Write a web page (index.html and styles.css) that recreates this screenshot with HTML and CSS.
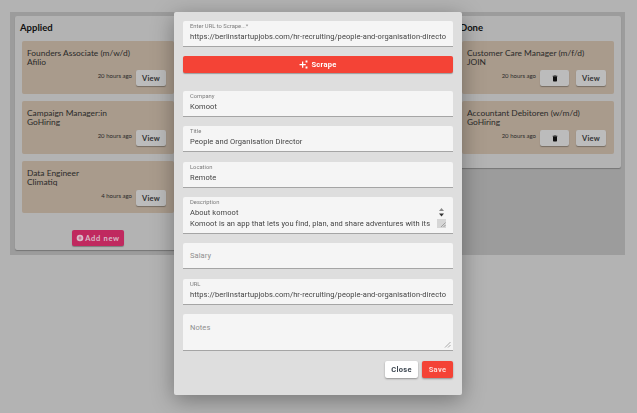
FILE: index.html
```html
<!DOCTYPE html>
<html lang="en">
<head>
<meta charset="utf-8">
<title>Job board</title>
<link rel="stylesheet" href="styles.css">
</head>
<body>
<main class="board">
  <section class="column">
    <h2 class="column-title">Applied</h2>
    <div class="cards">
      <article class="card">
        <p class="job">Founders Associate (m/w/d)<br>Afilio</p>
        <div class="card-foot"><span class="time">20 hours ago</span><button class="btn-gray">View</button></div>
      </article>
      <article class="card">
        <p class="job">Campaign Manager:in<br>GoHiring</p>
        <div class="card-foot"><span class="time">20 hours ago</span><button class="btn-gray">View</button></div>
      </article>
      <article class="card card-short">
        <p class="job">Data Engineer<br>Climatiq</p>
        <div class="card-foot"><span class="time">4 hours ago</span><button class="btn-gray">View</button></div>
      </article>
    </div>
    <div class="add-row">
      <button class="btn-add">
        <svg class="add-icon" viewBox="0 0 24 24"><path fill="currentColor" d="M12 2a10 10 0 1 0 0 20 10 10 0 0 0 0-20zm5 11h-4v4h-2v-4H7v-2h4V7h2v4h4z"/></svg>
        Add new
      </button>
    </div>
  </section>
  <section class="column column-empty"></section>
  <section class="column column-done">
    <h2 class="column-title">Done</h2>
    <div class="cards">
      <article class="card">
        <p class="job">Customer Care Manager (m/f/d)<br>JOIN</p>
        <div class="card-foot"><span class="time">20 hours ago</span>
          <button class="btn-gray btn-icon"><svg class="trash" viewBox="0 0 24 24"><path fill="currentColor" d="M15.500 4 14.500 3h-5l-1 1H5v2h14V4zM6 19a2 2 0 0 0 2 2h8a2 2 0 0 0 2-2V7H6z"/></svg></button>
          <button class="btn-gray">View</button></div>
      </article>
      <article class="card">
        <p class="job">Accountant Debitoren (w/m/d)<br>GoHiring</p>
        <div class="card-foot"><span class="time">20 hours ago</span>
          <button class="btn-gray btn-icon"><svg class="trash" viewBox="0 0 24 24"><path fill="currentColor" d="M15.500 4 14.500 3h-5l-1 1H5v2h14V4zM6 19a2 2 0 0 0 2 2h8a2 2 0 0 0 2-2V7H6z"/></svg></button>
          <button class="btn-gray">View</button></div>
      </article>
    </div>
  </section>
</main>

<div class="modal" role="dialog">
  <label class="field">
    <span class="label">Enter URL to Scrape...*</span>
    <input class="input" value="https://berlinstartupjobs.com/hr-recruiting/people-and-organisation-director">
  </label>
  <button class="btn-scrape">
    <svg class="spark" viewBox="0 0 24 24"><path fill="currentColor" d="M8 4h3.400v6.600H18V14h-6.600v6.600H8V14H1.400v-3.400H8zM17.500 1.500h5v5h-5zM17.500 17.500h5v5h-5z"/></svg>
    Scrape
  </button>
  <label class="field">
    <span class="label">Company</span>
    <input class="input" value="Komoot">
  </label>
  <label class="field">
    <span class="label">Title</span>
    <input class="input" value="People and Organisation Director">
  </label>
  <label class="field">
    <span class="label">Location</span>
    <input class="input" value="Remote">
  </label>
  <label class="field field-desc">
    <span class="label">Description</span>
    <textarea class="textarea" rows="2">About komoot
Komoot is an app that lets you find, plan, and share adventures with its</textarea>
    <svg class="scrollbar" viewBox="0 0 9 22">
      <path fill="#8a8a8a" d="M4.500 2 7 5H2z"/>
      <path fill="#333" d="M4.500 10.500 7 7.500H2z"/>
      <rect y="13" width="9" height="9" fill="#d6d6d6"/>
      <path stroke="#888" stroke-width=".7" d="M8.500 16.500 4 21M8.500 19 6.500 21"/>
    </svg>
  </label>
  <label class="field field-empty">
    <span class="placeholder">Salary</span>
  </label>
  <label class="field">
    <span class="label">URL</span>
    <input class="input" value="https://berlinstartupjobs.com/hr-recruiting/people-and-organisation-director">
  </label>
  <label class="field field-notes">
    <span class="placeholder">Notes</span>
    <svg class="grip" viewBox="0 0 8 8"><path stroke="#8a8a8a" stroke-width=".7" d="M7.500 2 2 7.500M7.500 5 5 7.500"/></svg>
  </label>
  <div class="actions">
    <button class="btn-close">Close</button>
    <button class="btn-save">Save</button>
  </div>
</div>
</body>
</html>
```
FILE: styles.css
```css
* { box-sizing: border-box; }
html, body { height: 100%; }
body {
  margin: 0;
  background: #b3b3b3;
  font-family: "Lato", sans-serif;
  color: #2b2b2b;
  overflow: hidden;
}
button { font-family: inherit; border: 0; cursor: pointer; }

.board {
  margin: 12px 12px 0 10px;
  height: 243px;
  padding: 4px 4px 5px 5px;
  background: #9c9c9c;
  display: grid;
  grid-template-columns: 166px 1fr 166px;
  column-gap: 4px;
  align-items: start;
}
.column {
  background: #b3b3b3;
  height: 234px;
  padding: 6px 7px 0;
  border-radius: 2px;
  box-shadow: 0 1px 1px rgba(0,0,0,.25);
  display: flex;
  flex-direction: column;
}
.column-empty { visibility: hidden; }
.column-done { height: 152px; }
.column-title {
  margin: 0 0 0 -2px;
  font-size: 9.500px;
  line-height: 12px;
  font-weight: 700;
  color: #111;
}
.cards { display: flex; flex-direction: column; gap: 7px; margin-top: 7px; }
.card {
  height: 53px;
  padding: 8px 5px 0;
  background: #a99b8c;
  border-radius: 2px;
}
.card-short { height: 52px; }
.job {
  margin: 0;
  font-size: 8.400px;
  line-height: 9px;
  color: #2a2a2a;
}
.card-foot {
  display: flex;
  justify-content: flex-end;
  align-items: flex-start;
  margin: 3px 3px 0 0;
}
.time {
  font-size: 6px;
  line-height: 8px;
  margin: 2px 4px 0 0;
  color: #2a2a2a;
}
.btn-gray {
  width: 30px;
  height: 16px;
  padding: 0;
  font-size: 7.500px;
  font-weight: 700;
  letter-spacing: .2px;
  color: #333;
  background: #bcbcbc;
  border-radius: 2px;
  box-shadow: 0 1px 1px rgba(0,0,0,.3);
}
.btn-icon {
  width: 29px;
  margin-right: 7px;
  display: flex;
  align-items: center;
  justify-content: center;
}
.trash { width: 8px; height: 9px; color: #111; }
.add-row { display: flex; justify-content: center; margin-top: 17px; }
.btn-add {
  width: 52px;
  height: 16px;
  padding: 0;
  display: flex;
  align-items: center;
  justify-content: center;
  gap: 1px;
  font-size: 7.500px;
  font-weight: 700;
  letter-spacing: .7px;
  color: #d8bcc8;
  background: #c0295f;
  border-radius: 2px;
  box-shadow: 0 1px 1px rgba(0,0,0,.3);
}
.add-icon { width: 8px; height: 8px; }

.modal {
  position: fixed;
  left: 174px;
  top: 12px;
  width: 288px;
  height: 383px;
  padding: 9px 9px 0;
  background: #dedede;
  border-radius: 2px;
  box-shadow: 0 5px 22px rgba(0,0,0,.35);
  font-family: "Roboto", sans-serif;
  display: flex;
  flex-direction: column;
}
.field {
  position: relative;
  display: block;
  flex: none;
  height: 26px;
  margin-bottom: 9.200px;
  padding: 2px 7px 0;
  background: #f5f5f5;
  border-bottom: 1px solid #a5a5a5;
  border-radius: 2px 2px 0 0;
}
.label {
  display: block;
  font-size: 5.800px;
  line-height: 7px;
  color: #7c7c7c;
}
.input, .textarea {
  display: block;
  width: 100%;
  padding: 0;
  border: 0;
  outline: 0;
  background: transparent;
  font-family: inherit;
  font-size: 7.500px;
  letter-spacing: .08px;
  color: #444;
  resize: none;
}
.input { height: 12px; line-height: 12px; margin-top: 1px; }
.textarea { height: 22px; line-height: 11px; margin-top: 1px; overflow: hidden; white-space: pre; }
.field-desc { height: 37px; }
.field-notes { height: 37px; padding-top: 8px; }
.field-empty { padding-top: 7px; margin-bottom: 10px; }
.placeholder {
  display: block;
  font-size: 7.500px;
  line-height: 11px;
  letter-spacing: .08px;
  color: #8f8f8f;
}
.scrollbar {
  position: absolute;
  right: 7px;
  top: 9px;
  width: 9px;
  height: 22px;
}
.grip {
  position: absolute;
  right: 2px;
  bottom: 2px;
  width: 8px;
  height: 8px;
}
.btn-scrape {
  flex: none;
  height: 17px;
  margin: 0 0 18px;
  padding: 0;
  display: flex;
  align-items: center;
  justify-content: center;
  gap: 3px;
  font-size: 7.500px;
  font-weight: 700;
  letter-spacing: .3px;
  color: #fff;
  background: #f44336;
  border-radius: 2px;
  box-shadow: 0 1px 1px rgba(0,0,0,.3);
}
.spark { width: 9px; height: 9px; }
.actions { display: flex; justify-content: flex-end; gap: 4px; margin-top: 1px; }
.btn-close, .btn-save {
  height: 17px;
  padding: 0;
  font-size: 7.500px;
  font-weight: 700;
  letter-spacing: .3px;
  border-radius: 2px;
  box-shadow: 0 1px 2px rgba(0,0,0,.35);
}
.btn-close { width: 33px; color: #3c4650; background: #fff; }
.btn-save { width: 31px; color: #ffd8d4; background: #f44336; }
```
